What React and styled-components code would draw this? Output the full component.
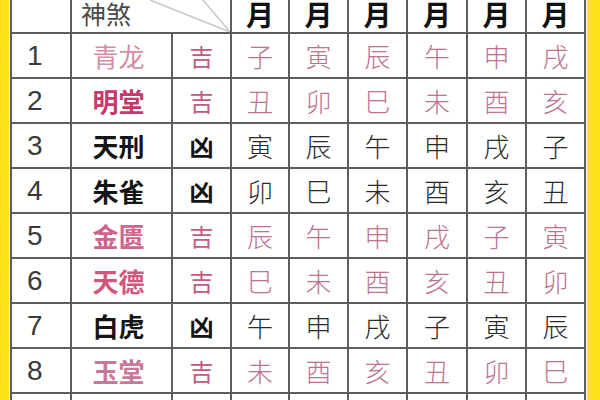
import React from "react";
import styled, { createGlobalStyle } from "styled-components";

const GlobalStyle = createGlobalStyle`
  html, body { margin: 0; padding: 0; background: #ffffff; }
  #root { width: 600px; height: 400px; }
`;

const Page = styled.div`
  display: flex;
  width: 600px;
  height: 400px;
  overflow: hidden;
  background: #ffe21c;
`;

const Sheet = styled.div`
  flex: 1;
  margin: 0 13px 0 9px;
  padding: 0 1px;
  background: #f7f4e6;
  overflow: hidden;
`;

const Grid = styled.div`
  display: grid;
  grid-template-columns: 58px 99px 57px 56px 57px 57px 58px 57px 57px;
  grid-template-rows: 32px;
  grid-auto-rows: 43px;
  gap: 2px;
  padding: 0 2px 2px;
  background: #5e5e5e;
`;

const Cell = styled.div`
  display: flex;
  align-items: center;
  justify-content: center;
  padding: ${(p) => p.$pad || "0"};
  background: #ffffff;
  color: ${(p) => p.$color || "#222"};
  font-family: "Noto Sans CJK SC", "Noto Sans", sans-serif;
  font-size: ${(p) => p.$size || 26}px;
  font-weight: ${(p) => p.$weight || 400};
  line-height: 1;
  overflow: hidden;
`;

const NumCell = styled(Cell)`
  justify-content: flex-start;
  padding-left: 15px;
  font-family: "Liberation Sans", Arial, sans-serif;
  font-size: 28px;
  color: #3a3a3a;
`;

const HeadCell = styled(Cell)`
  align-items: flex-end;
  font-size: 28px;
  font-weight: 700;
  color: #111;
  padding-bottom: 4px;
`;

const CornerCell = styled.div`
  position: relative;
  grid-column: span 2;
  display: flex;
  align-items: flex-end;
  padding: 0 0 6px 9px;
  background: #ffffff;
  overflow: hidden;
`;

const CornerLabel = styled.span`
  font-family: "Noto Sans CJK SC", "Noto Sans", sans-serif;
  font-size: 25px;
  line-height: 1;
  color: #4a4a4a;
`;

const Diagonals = styled.svg`
  position: absolute;
  inset: 0;
  width: 100%;
  height: 100%;
  pointer-events: none;
`;

const PINK_TEXT = "#bc7290";

const rows = [
  { n: 1, name: "青龙", good: true, nameColor: "#d28ea5", nameWeight: 400, z: ["子", "寅", "辰", "午", "申", "戌"] },
  { n: 2, name: "明堂", good: true, nameColor: "#c8386a", nameWeight: 700, z: ["丑", "卯", "巳", "未", "酉", "亥"] },
  { n: 3, name: "天刑", good: false, z: ["寅", "辰", "午", "申", "戌", "子"] },
  { n: 4, name: "朱雀", good: false, z: ["卯", "巳", "未", "酉", "亥", "丑"] },
  { n: 5, name: "金匮", good: true, nameColor: "#d0648c", nameWeight: 700, z: ["辰", "午", "申", "戌", "子", "寅"] },
  { n: 6, name: "天德", good: true, nameColor: "#d2567c", nameWeight: 700, z: ["巳", "未", "酉", "亥", "丑", "卯"] },
  { n: 7, name: "白虎", good: false, z: ["午", "申", "戌", "子", "寅", "辰"] },
  { n: 8, name: "玉堂", good: true, nameColor: "#c87898", nameWeight: 700, z: ["未", "酉", "亥", "丑", "卯", "巳"] },
  { n: 9, name: "天牢", good: false, z: ["申", "戌", "子", "寅", "辰", "午"] },
];

export default function App() {
  return (
    <>
      <GlobalStyle />
      <Page>
        <Sheet>
          <Grid>
            <Cell />
            <CornerCell>
              <CornerLabel>神煞</CornerLabel>
              <Diagonals viewBox="0 0 158 32" preserveAspectRatio="none">
                <line x1="158" y1="32" x2="78" y2="0" stroke="#c4c4c4" strokeWidth="1.4" />
                <line x1="158" y1="32" x2="131" y2="0" stroke="#c4c4c4" strokeWidth="1.4" />
              </Diagonals>
            </CornerCell>
            {Array.from({ length: 6 }).map((_, i) => (
              <HeadCell key={"m" + i}>月</HeadCell>
            ))}
            {rows.map((r) => (
              <React.Fragment key={r.n}>
                <NumCell>{r.n}</NumCell>
                <Cell
                  $pad="0 6px 0 0"
                  $color={r.good ? r.nameColor : "#141414"}
                  $weight={r.good ? r.nameWeight : 700}
                >
                  {r.name}
                </Cell>
                <Cell $size={24} $color={r.good ? "#c25a80" : "#141414"} $weight={r.good ? 400 : 700}>
                  {r.good ? "吉" : "凶"}
                </Cell>
                {r.z.map((c, i) => (
                  <Cell key={i} $weight={300} $color={r.good ? PINK_TEXT : "#2a2a2a"}>
                    {c}
                  </Cell>
                ))}
              </React.Fragment>
            ))}
          </Grid>
        </Sheet>
      </Page>
    </>
  );
}
